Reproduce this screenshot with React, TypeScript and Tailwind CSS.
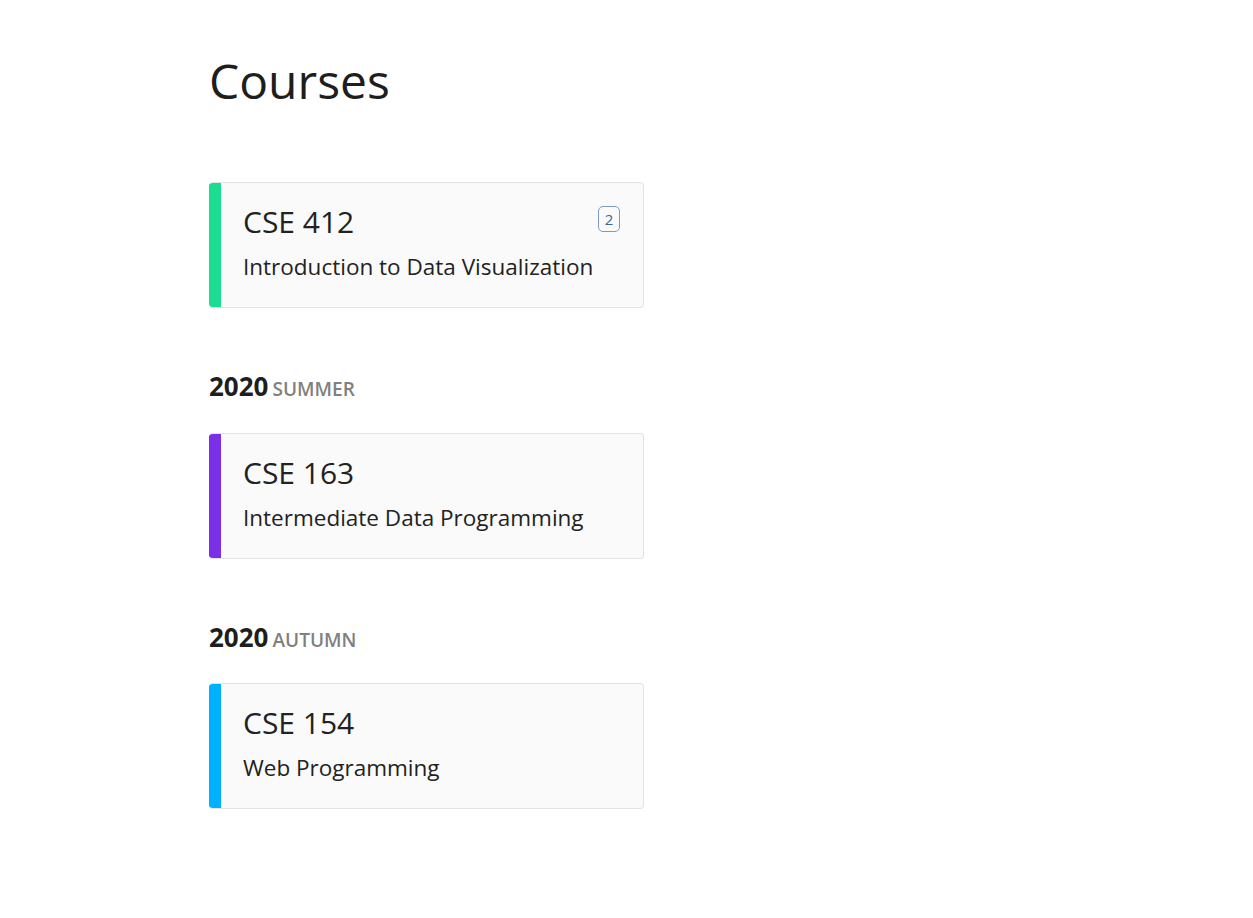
const courses = [
  { term: null, code: "CSE 412", name: "Introduction to Data Visualization", color: "bg-[#1bdc91]", badge: "2" },
  { term: ["2020", "Summer"], code: "CSE 163", name: "Intermediate Data Programming", color: "bg-[#7b2fe6]", badge: null },
  { term: ["2020", "Autumn"], code: "CSE 154", name: "Web Programming", color: "bg-[#00b1ff]", badge: null },
];

function CourseCard({ code, name, color, badge }: { code: string; name: string; color: string; badge: string | null }) {
  return (
    <div className="flex w-[435px] h-[126px] rounded-[4px] border-y border-r border-[#e3e3e3] bg-[#fafafa] overflow-hidden">
      <div className={`w-[12px] shrink-0 ${color}`}></div>
      <div className="flex-1 flex flex-col pl-[22px] pt-[19px] relative">
        <span className="text-[30px] leading-[40px] text-[#222]">{code}</span>
        <span className="text-[22.5px] leading-[32px] mt-[9px] text-[#222]">{name}</span>
        {badge && (
          <span className="absolute right-[23px] top-[23px] w-[22px] h-[26px] flex items-center justify-center border border-[#7d9cbc] rounded-[5px] text-[15px] text-[#3d6591]">
            {badge}
          </span>
        )}
      </div>
    </div>
  );
}

export default function App() {
  return (
    <div className="min-h-[918px] bg-white font-['Open_Sans',sans-serif] text-[#222]">
      <div className="pl-[209px] pt-[48px] pb-[80px]">
        <h1 className="text-[48px] leading-[66px] text-[#1e1e1e]">Courses</h1>
        <div className="flex flex-col mt-[68px]">
          {courses.map((c) => (
            <div key={c.code} className="flex flex-col">
              {c.term && (
                <div className="flex items-baseline gap-[4px] mt-[62px] mb-[29px]">
                  <span className="text-[26px] font-bold leading-[32px] text-[#1e1e1e]">{c.term[0]}</span>
                  <span className="text-[19px] font-semibold uppercase text-[#808080]">{c.term[1]}</span>
                </div>
              )}
              <CourseCard code={c.code} name={c.name} color={c.color} badge={c.badge} />
            </div>
          ))}
        </div>
      </div>
    </div>
  );
}
